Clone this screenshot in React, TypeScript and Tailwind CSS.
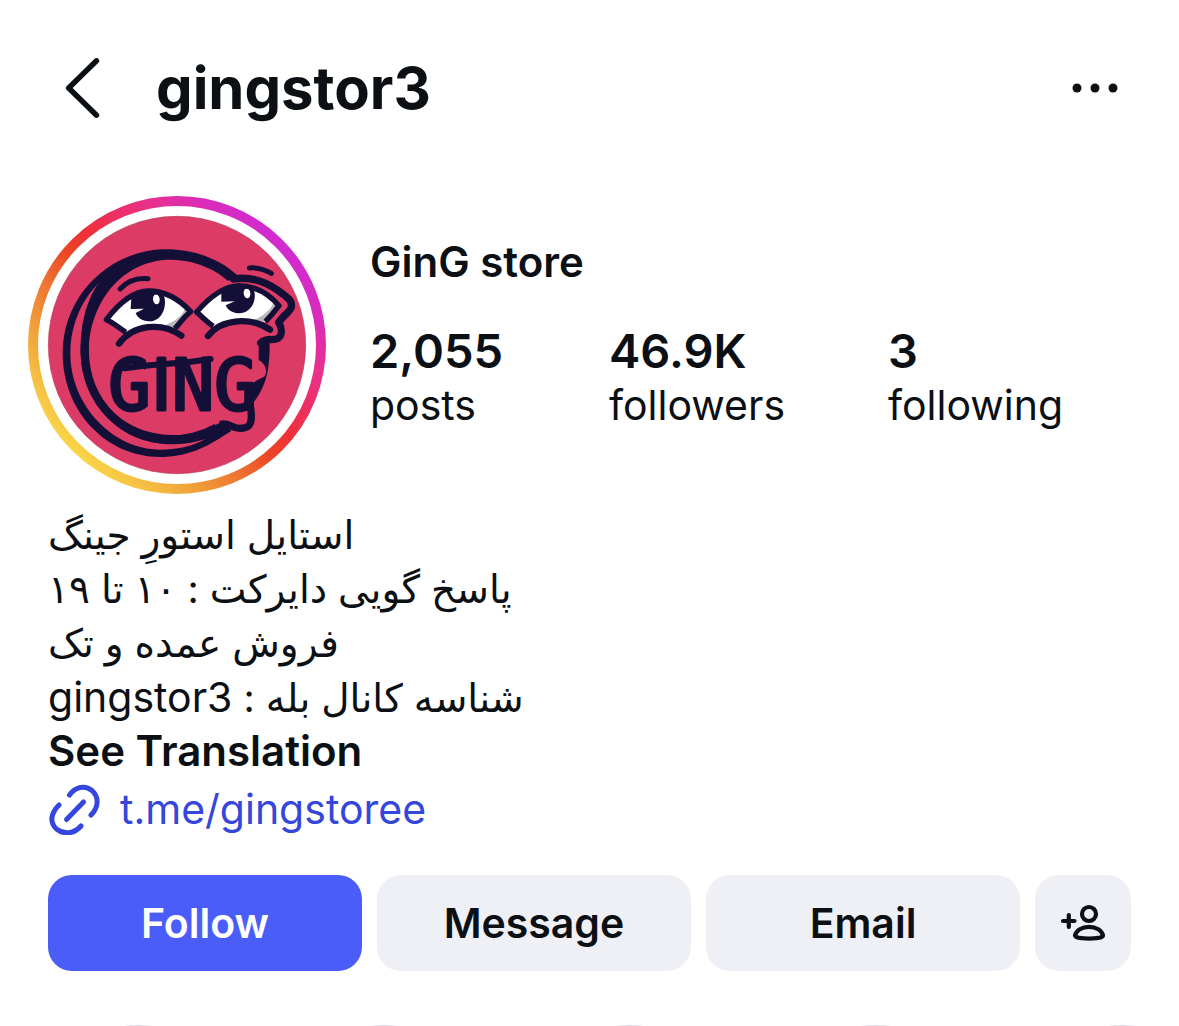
const stats = [
  { value: "2,055", label: "posts", width: "w-[239px]" },
  { value: "46.9K", label: "followers", width: "w-[279px]" },
  { value: "3", label: "following", width: "" },
];

const bioLines = [
  { text: "استایل استورِ جینگ", handle: "" },
  { text: "پاسخ گویی دایرکت : ۱۰ تا ۱۹", handle: "" },
  { text: "فروش عمده و تک", handle: "" },
  { text: "شناسه کانال بله : ", handle: "gingstor3" },
];

const highlights = ["one", "two", "three", "four", "five"];

const Avatar: React.FC = () => {
  return (
    <svg
      className="w-[298px] h-[298px] flex-shrink-0"
      viewBox="24 33 894 894"
      fill="none"
      role="img"
      aria-label="GinG store"
    >
      <defs>
        <linearGradient
          id="story-ring"
          gradientUnits="userSpaceOnUse"
          x1="155"
          y1="796"
          x2="787"
          y2="164"
        >
          <stop offset="0" stopColor="#f9d648" />
          <stop offset="0.18" stopColor="#f1a63c" />
          <stop offset="0.32" stopColor="#ee7a33" />
          <stop offset="0.46" stopColor="#ec4526" />
          <stop offset="0.55" stopColor="#ef3038" />
          <stop offset="0.76" stopColor="#ea3088" />
          <stop offset="0.9" stopColor="#da2cba" />
          <stop offset="1" stopColor="#d02bd2" />
        </linearGradient>
      </defs>

      {/* Story ring */}
      <circle cx="471" cy="480" r="432" stroke="url(#story-ring)" strokeWidth="30" />
      <circle cx="471" cy="480" r="386" fill="#db3b64" stroke="#b93a5c" strokeWidth="2" />

      {/* Face outline */}
      <g fill="#140f36">
        <path d="M652 271 C600 222 520 191 430 193 C270 197 128 330 128 505 C128 680 260 816 420 816 C500 816 560 785 606 755 L634 738 L606 710 C560 735 510 752 455 750 C310 748 206 640 206 505 C206 350 310 222 455 224 C530 226 590 256 624 288 Z" />
        <path d="M716 464 L749 476 C749 525 744 565 734 592 C722 624 706 650 689 663 L686 615 C697 590 712 585 731 576 C743 566 742 540 716 525 Z" />
      </g>
      <path
        d="M316 240 C230 285 182 385 182 500 C182 650 300 775 455 778 C492 778 525 772 556 762 C515 785 470 794 420 794 C280 794 151 662 151 505 C151 385 220 280 316 240 Z"
        fill="#db3b64"
      />
      <path
        d="M316 236 C232 282 192 385 194 500 C198 655 310 764 450 764 C500 764 550 750 590 728"
        stroke="#140f36"
        strokeWidth="25"
      />
      <path
        d="M600 718 C630 712 632 730 660 730 C688 730 694 718 694 692 C694 665 685 655 692 635"
        stroke="#140f36"
        strokeWidth="22"
      />
      <path
        d="M640 282 C700 272 742 294 772 315 C800 335 818 346 814 366 C811 380 790 391 776 412 C786 430 788 450 774 460 C758 469 740 456 722 474"
        stroke="#140f36"
        strokeWidth="22"
        strokeLinecap="round"
        strokeLinejoin="round"
      />

      {/* Eyebrows */}
      <g stroke="#140f36" strokeWidth="15" strokeLinecap="round">
        <path d="M300 312 C320 290 350 278 384 281" />
        <path d="M688 249 C712 247 736 254 754 265" />
      </g>

      {/* Left eye */}
      <path
        d="M258 404 C300 350 345 319 385 318 C435 318 480 345 512 380 C492 395 480 420 462 434 C410 418 350 418 322 446 C305 440 280 415 258 404 Z"
        fill="#fff"
      />
      <path d="M506 382 C490 400 480 420 462 432 L432 423 C462 410 486 395 494 372 Z" fill="#b9b8bd" />
      <path
        d="M334 338 C352 320 412 312 430 326 C444 360 428 410 386 409 C366 407 352 398 347 384 L372 371 L332 372 Z"
        fill="#140f36"
      />
      <ellipse cx="409" cy="343" rx="10" ry="15" fill="#fff" transform="rotate(-8 409 343)" />
      <path
        d="M318 442 C300 432 280 412 259 404 C300 350 345 319 385 318 C435 318 480 345 512 380 C492 395 480 415 464 431"
        stroke="#140f36"
        strokeWidth="16"
        strokeLinejoin="round"
      />
      <path
        d="M297 476 C340 418 425 410 484 452"
        stroke="#140f36"
        strokeWidth="19"
        strokeLinecap="round"
      />

      {/* Right eye */}
      <path
        d="M530 382 C570 335 610 304 655 302 C710 302 750 330 778 362 C762 382 750 396 734 411 C690 401 625 398 582 426 C565 418 548 398 530 382 Z"
        fill="#fff"
      />
      <path d="M775 362 C760 384 745 400 730 410 L702 405 C730 392 752 376 762 350 Z" fill="#b9b8bd" />
      <path
        d="M604 322 C622 306 682 296 700 308 C714 345 694 386 654 385 C634 383 622 374 617 361 L644 349 L604 350 Z"
        fill="#140f36"
      />
      <ellipse cx="681" cy="325" rx="10" ry="15" fill="#fff" transform="rotate(-8 681 325)" />
      <path
        d="M580 424 C565 415 548 398 530 381 C570 335 610 304 655 302 C710 302 750 330 777 362 C762 382 750 396 736 410"
        stroke="#140f36"
        strokeWidth="16"
        strokeLinejoin="round"
      />
      <path
        d="M564 453 C605 400 695 395 750 434"
        stroke="#140f36"
        strokeWidth="19"
        strokeLinecap="round"
      />

      {/* Wordmark */}
      <text
        x="265"
        y="675"
        fill="#140f36"
        stroke="#140f36"
        strokeWidth="9"
        strokeLinejoin="round"
        className="font-['DejaVu_Sans_Mono','Liberation_Mono',monospace] text-[212px]"
      >
        G<tspan className="font-['DejaVu_Sans',sans-serif]">I</tspan>NG
      </text>
      <path d="M315 550 C400 536 480 538 572 522" stroke="#140f36" strokeWidth="18" strokeLinecap="round" />
    </svg>
  );
};

const LinkIcon: React.FC = () => (
  <svg
    className="w-[52px] h-[52px] flex-shrink-0"
    viewBox="0 0 52 52"
    fill="none"
    stroke="currentColor"
    strokeWidth="5"
    strokeLinecap="round"
  >
    <path d="M21.5 12 C27 4 37 1.500 44 7.500 C51.500 14.500 50.500 24.500 43 32" />
    <path d="M11 22 C2.500 30.500 1.500 39.500 8.500 46 C16 52 26 51 33 43" />
    <path d="M18.500 36.500 L35.500 19" />
  </svg>
);

const App: React.FC = () => {
  return (
    <main className="h-screen overflow-hidden bg-white text-[#0c1014] font-['Inter','DejaVu_Sans',sans-serif]">
      <header className="flex items-center h-[176px] pl-[64px] pr-[60px]">
        <button type="button" aria-label="Back" className="flex-shrink-0">
          <svg
            className="w-[36px] h-[60px]"
            viewBox="0 0 36 60"
            fill="none"
            stroke="currentColor"
            strokeWidth="5.4"
            strokeLinecap="round"
            strokeLinejoin="round"
          >
            <path d="M32.500 2.800 L4.700 30 L32.500 57.200" />
          </svg>
        </button>
        <h1 className="flex-1 ml-14 text-[58px] leading-[72px] font-bold">gingstor3</h1>
        <button type="button" aria-label="More options">
          <svg className="w-[48px] h-[12px]" viewBox="0 0 48 12" fill="currentColor">
            <circle cx="6" cy="6" r="4.500" />
            <circle cx="24" cy="6" r="4.500" />
            <circle cx="42" cy="6" r="4.500" />
          </svg>
        </button>
      </header>

      <section className="flex items-start pt-5 pl-7">
        <Avatar />
        <div className="ml-[44px] pt-[39px]">
          <h2 className="text-[42px] leading-[54px] font-semibold">GinG store</h2>
          <ul className="flex mt-[34px]">
            {stats.map((stat) => (
              <li key={stat.label} className={stat.width}>
                <div className="text-[47px] leading-[56px] font-semibold">{stat.value}</div>
                <div className="text-[41px] leading-[52px]">{stat.label}</div>
              </li>
            ))}
          </ul>
        </div>
      </section>

      <section className="px-12 pt-[14px] text-[41px] leading-[54px]">
        {bioLines.map((line) => (
          <p
            key={line.text}
            dir="rtl"
            className="h-[54px] text-left text-[39px] whitespace-nowrap"
          >
            {line.text}
            {line.handle && <span className="text-[41px]">{line.handle}</span>}
          </p>
        ))}
        <button type="button" className="block text-[42px] font-semibold">
          See Translation
        </button>
        <a href="#" className="flex items-center w-fit h-[62px] gap-5 text-[#3446db]">
          <LinkIcon />
          t.me/gingstoree
        </a>
      </section>

      {/* Actions */}
      <div className="flex gap-[15px] px-12 pt-[35px] text-[41px] leading-[54px] font-semibold">
        <button type="button" className="flex-1 h-[96px] rounded-3xl bg-[#4a5df9] text-white">
          Follow
        </button>
        <button type="button" className="flex-1 h-[96px] rounded-3xl bg-[#eff0f5]">
          Message
        </button>
        <button type="button" className="flex-1 h-[96px] rounded-3xl bg-[#eff0f5]">
          Email
        </button>
        <button
          type="button"
          aria-label="Suggested accounts"
          className="flex items-center justify-center w-[96px] h-[96px] rounded-3xl bg-[#eff0f5]"
        >
          <svg
            className="w-[48px] h-[40px]"
            viewBox="0 0 48 40"
            fill="none"
            stroke="currentColor"
            strokeWidth="4.2"
            strokeLinecap="round"
            strokeLinejoin="round"
          >
            <circle cx="30" cy="11" r="7" />
            <path d="M16 32.500 C17 27.500 23 23.800 30 23.800 C37 23.800 43 27.500 44 32.500 C44 36.600 16 36.600 16 32.500 Z" />
            <path d="M4 18 H15.500 M9.800 12 V24" />
          </svg>
        </button>
      </div>

      {/* Highlights, only their tops reach into the window */}
      <ul className="flex gap-[54px] pl-[42px] pt-[54px]">
        {highlights.map((name) => (
          <li
            key={name}
            className="w-[192px] h-[192px] flex-shrink-0 rounded-full border-2 border-[#dcdde1]"
          />
        ))}
      </ul>
    </main>
  );
};

export default App;
